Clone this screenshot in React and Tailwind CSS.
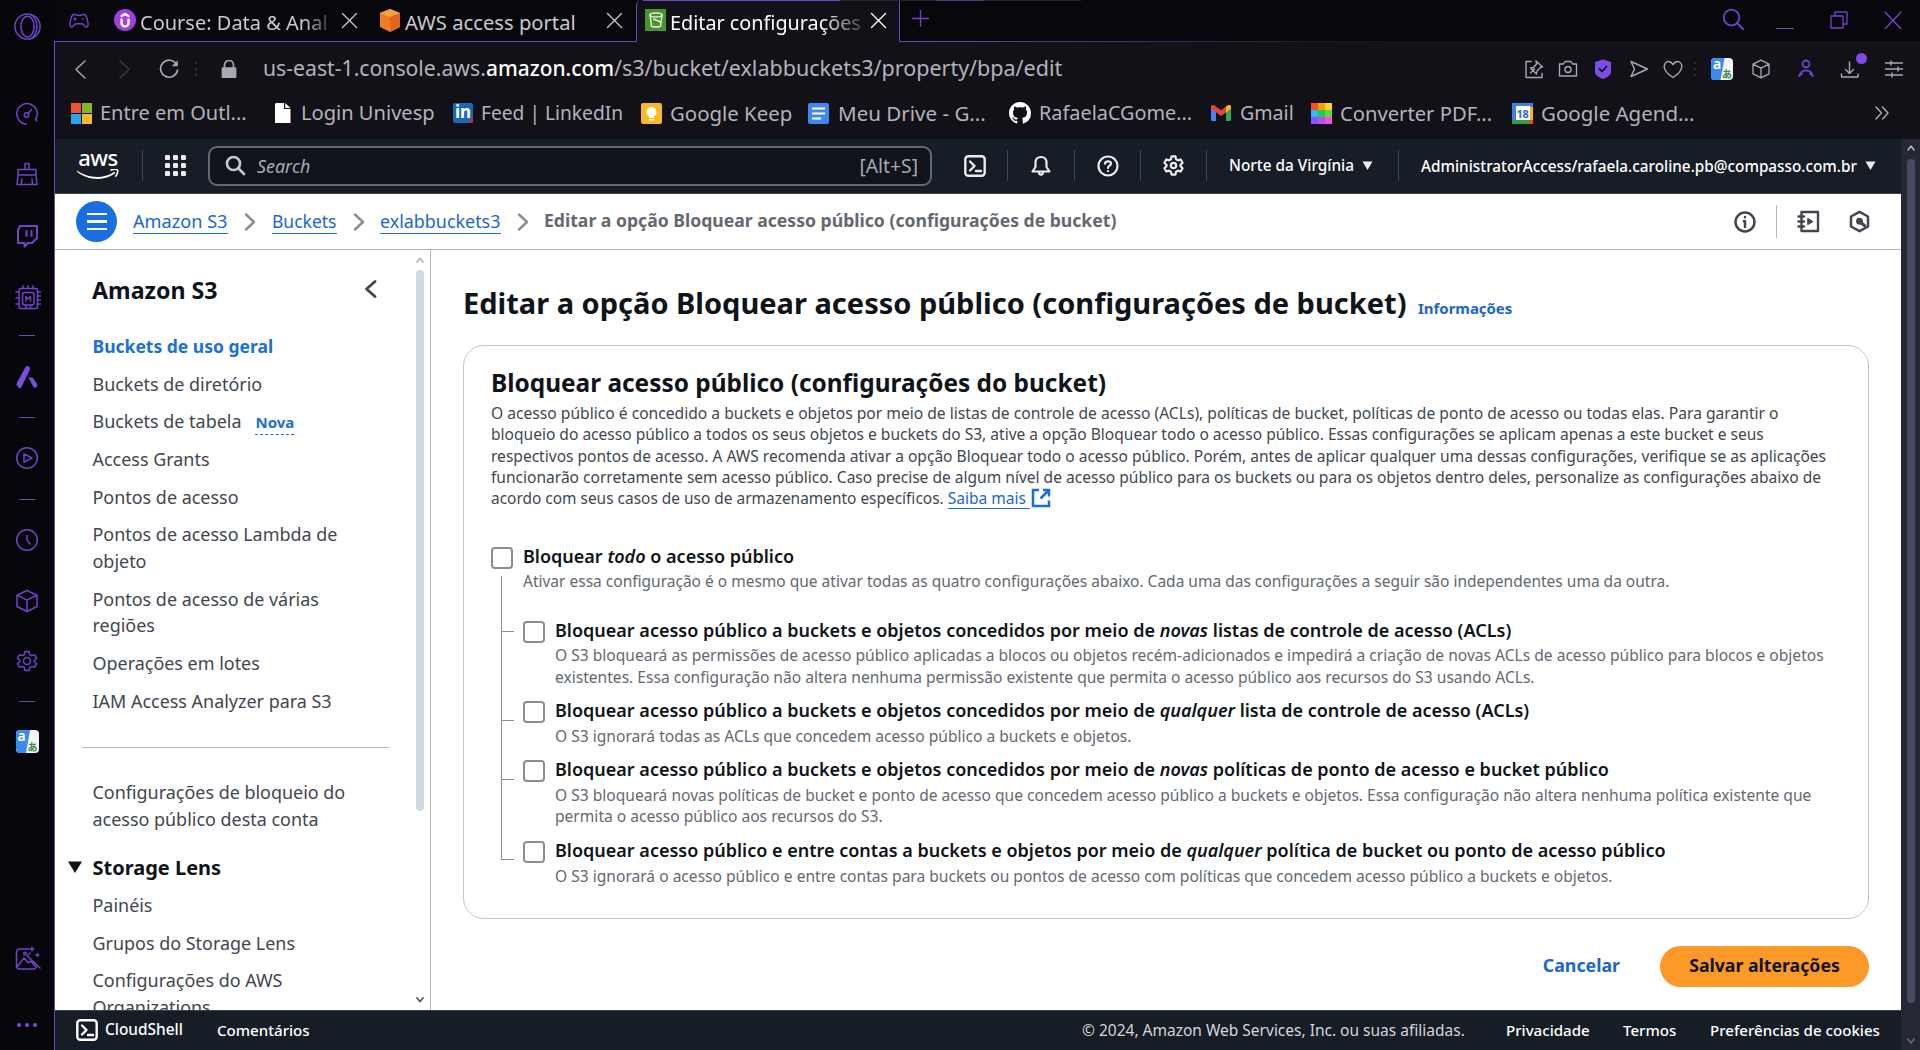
import React from "react";

/* ---------- shared drawing helpers ---------- */

function Ico({ className = "", box = 24, sw = 1.5, fill = "none", children }) {
  return (
    <svg
      viewBox={`0 0 ${box} ${box}`}
      className={`shrink-0 ${className}`}
      fill={fill}
      stroke={fill === "none" ? "currentColor" : "none"}
      strokeWidth={sw}
      strokeLinecap="round"
      strokeLinejoin="round"
    >
      {children}
    </svg>
  );
}

function Translate({ className }) {
  return (
    <span className={`relative block shrink-0 rounded-[4px] bg-[#f2f4f5] ${className}`}>
      <svg viewBox="0 0 22 22" className="absolute inset-0 size-full">
        <path d="M4 0h9.500L9.500 22H4a4 4 0 0 1-4-4V4a4 4 0 0 1 4-4z" fill="#3a8bea" />
      </svg>
      <span className="absolute left-[2px] top-0 font-['Noto_Sans'] text-[14px] font-semibold leading-[11px] text-white">a</span>
      <span className="absolute bottom-[1px] right-[1px] font-['Noto_Sans_CJK_JP'] text-[10px] font-bold leading-[11px] text-[#3c8b3f]">あ</span>
    </span>
  );
}

const gearPath =
  "M10 2.5h4l.7 3 1.9 1.1 2.9-.9 2 3.5-2.2 2.1v1.4l2.2 2.1-2 3.5-2.9-.9-1.9 1.1-.7 3h-4l-.7-3-1.9-1.1-2.9.9-2-3.5 2.2-2.1v-1.4L2.5 9.2l2-3.5 2.9.9 1.9-1.1z";

/* ---------- left browser rail ---------- */

function Dash({ className }) {
  return <span className={`block h-px w-4 self-center bg-[#6c46c4] ${className}`} />;
}

function Rail() {
  return (
    <aside className="flex h-[1050px] w-[54px] shrink-0 flex-col items-center bg-[#07060b] text-[#6d45c6]">
      <Ico className="mt-[13px] size-[27px]" box={27}>
        <circle cx="13.5" cy="13.5" r="12.6" />
        <ellipse cx="13.5" cy="13.5" rx="6.6" ry="10.3" />
        <path d="M16 1.4c4 1.2 7 6.300 7 12.100s-3 10.900-7 12.100" />
      </Ico>
      <Ico className="mt-[62px] size-6">
        <path d="M11.500 22A10.200 10.200 0 1 1 20.500 17.500" />
        <circle cx="11.500" cy="13" r="2.200" />
        <path d="m13 11.500 3.500-4" />
        <path d="M21.500 15v4" strokeDasharray="1 2" />
      </Ico>
      <Ico className="mt-9 size-6">
        <path d="M10 7.500V1.500h4v6M3 13V7.500h18V13M3 13 2 22.500h20L21 13zM7 17l-.7 5M17 17l.5 5" />
      </Ico>
      <Ico className="mt-[38px] size-6" sw={2}>
        <path d="M5 2h17v12l-5 5h-4l-3.500 3.500V19H3V6z" />
        <path d="M11.500 7v5M16.500 7v5" />
      </Ico>
      <Ico className="mt-[37px] ml-[2px] size-[26px]" box={26}>
        <rect x="4" y="3.500" width="18.500" height="20" rx="1.500" />
        <rect x="7.500" y="7.500" width="11.500" height="12.500" rx="2.500" />
        <path d="M11 16v-4.500l2.200 2.500 2.300-2.500V16M8 3V.800M13 3V.800M18 3V.800M4 7H1M4 13H1M4 19H1M22.500 7H25.500M22.500 11h3M22.500 15h3M22.500 19h3M11 20v3.500M15.500 20v3.500" />
      </Ico>
      <Dash className="mt-6" />
      <Ico className="mt-[29px] size-6" fill="#7c4be0">
        <path d="M12.500 1c1.500 0 2.500 1.500 2.500 3.500L6.500 22c-.8 1.600-2 1.500-3 .5L2 20.500c-.7-1-.5-2 0-3L10 3c.6-1.200 1.500-2 2.500-2z" />
        <path d="M13.500 12.500c2.500-.8 4.500 0 5.500 2l3 4.500c.6.800.5 1.800 0 2.500l-1.200 1c-1 .7-2 .3-2.600-.700z" />
      </Ico>
      <Dash className="mt-7" />
      <Ico className="mt-7 size-6">
        <circle cx="12" cy="12" r="10.300" />
        <path d="M9 7.800v8.400l8-4.200z" />
      </Ico>
      <Dash className="mt-[29px]" />
      <Ico className="mt-7 size-6">
        <circle cx="12" cy="12" r="10.300" />
        <path d="M12 7.500V12l3.200 4" />
      </Ico>
      <Ico className="mt-[37px] size-6">
        <path d="m12 1.500 10 4.700v11.300l-10 5-10-5V6.200zM2 6.200l10 5 10-5M12 11.200v11.300" />
      </Ico>
      <Ico className="mt-9 size-6">
        <path d={gearPath} />
        <circle cx="12" cy="12" r="3.500" />
      </Ico>
      <Dash className="mt-7" />
      <Translate className="mt-7 size-[23px]" />
      <Ico className="mt-[193px] ml-[2px] size-[26px]" box={26}>
        <path d="M14 3H4.500A3 3 0 0 0 1.500 6v14a3 3 0 0 0 3 3H19a3 3 0 0 0 2.500-1.500M2 21l7-9 4.500 5 2.500-2 5 6M12 9.500 25 22M15 7l-1.500 1.500" />
        <circle cx="10" cy="7.500" r="1.300" />
        <path d="M17 1v4M15 3h4M22.500 7.500v3M21 9h3" />
      </Ico>
      <div className="mt-[51px] flex gap-1">
        <span className="size-1 rounded-full bg-[#7c4be0]" />
        <span className="size-1 rounded-full bg-[#7c4be0]" />
        <span className="size-1 rounded-full bg-[#7c4be0]" />
      </div>
    </aside>
  );
}

/* ---------- tab strip ---------- */

function Cross({ className }) {
  return (
    <Ico className={`h-[17px] w-[17px] ${className}`} box={17} sw={1.3}>
      <path d="m1.500 1.500 14 14M15.500 1.500l-14 14" />
    </Ico>
  );
}

function TabStrip() {
  return (
    <div className="relative flex h-[42px] bg-[#08070c] text-[20px] leading-[27px] text-[#c9c9cf]">
      <div className="flex h-[42px] w-[582px] shrink-0 border-b border-[#6c46c4] pl-[15px]">
        <Ico className="mt-[11px] h-[20px] w-[20px] text-[#6d45c6]" box={20} sw={1.4}>
          <path d="M4.500 3.500C6 2.800 7 4.500 10 4.500s4-1.700 5.500-1c2.500 1.200 3.800 8 3.500 11-.1 1.700-2 2-3 .8-1.300-1.600-1.800-2.600-3.500-2.600h-5c-1.700 0-2.200 1-3.500 2.600-1 1.200-2.900.9-3-.8-.3-3 1-9.800 3.500-11z" />
          <path d="M6 7v2M5 8h2M13.500 8h.5" />
        </Ico>
        <div className="ml-[25px] mt-[9px] flex size-[22px] shrink-0 items-center justify-center rounded-full bg-[#a03ee6] text-white">
          <Ico className="size-[18px]" box={18} sw={2.400}>
            <path d="M5.500 8.500v3.500a3.500 3.500 0 0 0 7 0V8.500M5.500 5 9 3l3.500 2" />
          </Ico>
        </div>
        <div className="ml-[4px] mt-[9px] w-[194px] shrink-0 whitespace-nowrap [mask-image:linear-gradient(to_right,#000_165px,transparent_196px)]">
          Course: Data &amp; Anal
        </div>
        <Cross className="ml-[7px] mt-[12px]" />
        <svg viewBox="0 0 22 24" className="ml-[21px] mt-[8px] h-[24px] w-[22px] shrink-0">
          <path d="M11 1 21 5v14l-10 5L1 19V5z" fill="#ef7d23" />
          <path d="M11 1 21 5l-10 4L1 5z" fill="#f9a13a" />
          <path d="M11 9 21 5v14l-10 5z" fill="#e4661c" />
        </svg>
        <span className="ml-[4px] mt-[9px] w-[173px] shrink-0 whitespace-nowrap text-[20.200px]">AWS access portal</span>
        <Cross className="ml-[28px] mt-[12px]" />
      </div>
      <div className="flex h-[42px] w-[264px] shrink-0 rounded-tl-[5px] border-l border-r border-[#6c46c4] bg-[#121117] pl-[8px] text-white">
        <div className="mt-[9px] flex h-[22px] w-[21px] shrink-0 items-center justify-center bg-[#4a942f]">
          <Ico className="size-[18px] text-[#dff0d5]" box={18}>
            <ellipse cx="9" cy="4" rx="6" ry="2" />
            <path d="m3 4 1.500 11c1 1.300 8 1.300 9 0L15 4M6.500 8l7 3" />
          </Ico>
        </div>
        <div className="ml-[4px] mt-[9px] w-[192px] shrink-0 whitespace-nowrap text-[19.800px] [mask-image:linear-gradient(to_right,#000_150px,transparent_202px)]">
          Editar configurações
        </div>
        <Cross className="ml-[8px] mt-[12px]" />
      </div>
      <div className="flex flex-1 flex-col">
        <div className="flex h-[41px] pl-[12px] text-[#6d45c6]">
          <Ico className="mt-[10px] size-[17px]" box={17} sw={1.300}>
            <path d="M8.500.500v16M.500 8.500h16" />
          </Ico>
          <Ico className="ml-[793px] mt-[8px] size-[22px]" box={22} sw={1.800}>
            <circle cx="9.500" cy="9.500" r="7.800" />
            <path d="m15 15 6 6" />
          </Ico>
          <span className="ml-[32px] mt-[28px] h-px w-[18px] shrink-0 bg-[#6d45c6]" />
          <Ico className="ml-[36px] mt-[11px] size-[18px]" box={18} sw={1.300}>
            <path d="M1 5h12v12H1zM5 5V1h12v12h-4" />
          </Ico>
          <Ico className="ml-[36px] mt-[11px] size-[18px]" box={18} sw={1.400}>
            <path d="m1 1 16 17M17 1 1 18" />
          </Ico>
        </div>
        <div className="h-px bg-gradient-to-r from-[#6c46c4] from-0% to-[#121117] to-50%" />
      </div>
      <div className="absolute left-[589px] top-0 flex h-px">
        <span className="w-[197px] bg-[#6c46c4]" />
        <span className="w-[96px] bg-[#26252c]" />
        <span className="w-[48px] bg-[#4b3a7c]" />
        <span className="w-[97px] bg-[#26252c]" />
      </div>
    </div>
  );
}

/* ---------- address bar ---------- */

function AddressBar() {
  return (
    <div className="flex h-[54px] items-center bg-[#121117] text-[#a9a8b4]">
      <Ico className="ml-[16px] size-[19px]" box={19} sw={1.500}>
        <path d="M14 1 5 9.500l9 8.500" />
      </Ico>
      <Ico className="ml-[25px] size-[19px] text-[#3b3a42]" box={19} sw={1.500}>
        <path d="m5 1 9 8.500L5 18" />
      </Ico>
      <Ico className="ml-[25px] size-[20px]" box={20} sw={1.700}>
        <path d="M17.500 5.500A8.500 8.500 0 1 0 18.500 11" />
        <path d="M18.500 2v5h-5z" fill="currentColor" strokeWidth="0.500" />
      </Ico>
      <div className="ml-[16px] flex flex-col gap-[4px]">
        <span className="size-[2px] bg-[#2e2d35]" />
        <span className="size-[2px] bg-[#2e2d35]" />
        <span className="size-[2px] bg-[#2e2d35]" />
      </div>
      <Ico className="ml-[23px] size-[18px]" box={18} sw={1.700}>
        <path d="M4.500 8V5a4.500 4.500 0 0 1 9 0v3" />
        <path d="M2.500 8h13v9.300h-13z" fill="currentColor" />
      </Ico>
      <div className="-mt-[3px] ml-[25px] flex whitespace-nowrap text-[21.200px] leading-[30px] text-[#b3b3bd]">
        <span className="w-[223px]">us-east-1.console.aws.</span>
        <span className="w-[128px] text-[20.900px] font-medium text-white">amazon.com</span>
        <span className="w-[449px] text-[21.500px]">/s3/bucket/exlabbuckets3/property/bpa/edit</span>
      </div>
      <Ico className="ml-[461px] size-[20px]" box={20} sw={1.400}>
        <path d="M7 2.500H2v16h16v-4M6.500 14l4-4M12 2l6.500 6-2 .5-3.500 3.500-.5 3L6.500 9l3-.5L12.500 5z" />
      </Ico>
      <Ico className="ml-[14px] size-[20px]" box={20} sw={1.400}>
        <path d="M1.500 5h4l1.500-2.500h6L14.500 5h4v12h-17z" />
        <circle cx="10" cy="10.500" r="3" />
      </Ico>
      <svg viewBox="0 0 18 20" className="ml-[16px] h-[20px] w-[18px] shrink-0">
        <path d="M9 .500 17 3v10c0 3.500-4 5.500-8 7-4-1.500-8-3.500-8-7V3z" fill="#7c4be8" />
        <path d="m5 9.500 3 3 5-5.500" fill="none" stroke="#121117" strokeWidth="1.800" />
      </svg>
      <Ico className="ml-[17px] size-[20px]" box={20} sw={1.400}>
        <path d="m2 2.500 16.500 7.500L2 17.500 5.500 10z" />
      </Ico>
      <Ico className="ml-[14px] size-[20px]" box={20} sw={1.400}>
        <path d="M10 18.500C4.500 15 1.200 11.500 1.200 7.500c0-3 2-5 4.300-5S9 4 10 5.500c1-1.500 2.200-3 4.500-3s4.300 2 4.300 5c0 4-3.300 7.500-8.800 11z" />
      </Ico>
      <div className="ml-[11px] flex flex-col gap-[4px]">
        <span className="size-[2px] bg-[#2e2d35]" />
        <span className="size-[2px] bg-[#2e2d35]" />
        <span className="size-[2px] bg-[#2e2d35]" />
      </div>
      <Translate className="ml-[15px] size-[22px]" />
      <Ico className="ml-[18px] size-[20px]" box={20} sw={1.300}>
        <path d="m10 1.200 8 4v9.600l-8 4-8-4V5.200zM2 5.200l8 4 8-4M10 9.200v9.600" />
      </Ico>
      <Ico className="ml-[25px] size-[20px] text-[#6d45c6]" box={20} sw={1.800}>
        <circle cx="10" cy="5" r="3.500" />
        <path d="M3.500 17c0-3.500 3-5.500 6.500-5.500s6.500 2 6.500 5.500M6 14.500 3 17M14 14.500l3 2.500" />
      </Ico>
      <div className="relative ml-[24px] size-[20px] shrink-0">
        <Ico className="size-[20px]" box={20} sw={1.400}>
          <path d="M9.500 3v11M5.500 10.500l4 4 4-4M1.500 15v3h16.500v-3" />
        </Ico>
        <span className="absolute -top-[6px] left-[16px] size-[11px] rounded-full bg-[#7c4be8]" />
      </div>
      <Ico className="ml-[24px] size-[20px]" box={20} sw={1.400}>
        <path d="M1.500 4h17M1.500 10h17M1.500 16h17M7 2v4M14 8v4M8 14v4" />
      </Ico>
    </div>
  );
}

/* ---------- bookmarks ---------- */

function Bookmarks() {
  return (
    <div className="flex h-[43px] bg-[#121117] pb-[9px] text-[#b3b3bd]">
      <div className="flex flex-1 items-center whitespace-nowrap text-[20px] leading-[30px]">
        <div className="ml-[16px] grid size-[21px] shrink-0 grid-cols-2 gap-px">
          <span className="bg-[#f0532a]" />
          <span className="bg-[#80b82c]" />
          <span className="bg-[#2ba3ee]" />
          <span className="bg-[#fbb72d]" />
        </div>
        <span className="ml-[8px] w-[148px] shrink-0">Entre em Outl...</span>
        <svg viewBox="0 0 16 20" className="ml-[27px] h-[20px] w-[16px] shrink-0">
          <path d="M1 0h8v6h6.500v14H0V1z" fill="#fff" />
          <path d="m10.200 0 5.300 5h-5.300z" fill="#fff" />
        </svg>
        <span className="ml-[10px] w-[134px] shrink-0 text-[20.100px]">Login Univesp</span>
        <div className="relative ml-[18px] flex h-[20px] w-[20px] shrink-0 items-center justify-center rounded-[2px] bg-[#1d67b8] text-[17px] font-bold leading-none text-white">
          <span className="-mt-[3px]">in</span>
          <span className="absolute bottom-0 right-0 size-[4px] rounded-full bg-[#d22c35]" />
        </div>
        <span className="ml-[8px] w-[142px] shrink-0 text-[19.200px]">Feed | LinkedIn</span>
        <svg viewBox="0 0 21 21" className="ml-[18px] size-[21px] shrink-0">
          <rect width="21" height="21" rx="2" fill="#fbb827" />
          <circle cx="10.500" cy="9" r="5" fill="#fff" />
          <path d="M8 12h5v3H8zM8 16h5v1.500H8z" fill="#fff" />
        </svg>
        <span className="ml-[8px] w-[123px] shrink-0 text-[20.400px]">Google Keep</span>
        <svg viewBox="0 0 21 21" className="ml-[15px] size-[21px] shrink-0">
          <rect width="21" height="21" rx="2" fill="#4285f4" />
          <path d="M4 4.500h13v2H4zM4 9.500h13v2H4zM4 14.500h9v2H4z" fill="#fff" />
        </svg>
        <span className="ml-[9px] w-[149px] shrink-0 text-[20.550px]">Meu Drive - G...</span>
        <svg viewBox="0 0 16 16" className="ml-[22px] size-[22px] shrink-0">
          <path
            fill="#fff"
            d="M8 0C3.580 0 0 3.580 0 8c0 3.540 2.290 6.530 5.470 7.590.4.070.55-.17.55-.38 0-.19-.01-.82-.01-1.490-2.010.37-2.530-.49-2.690-.94-.09-.23-.48-.94-.82-1.130-.28-.15-.68-.52-.01-.53.63-.01 1.080.58 1.230.82.720 1.210 1.870.87 2.330.66.070-.52.280-.87.510-1.070-1.780-.2-3.640-.89-3.640-3.950 0-.87.310-1.590.820-2.150-.08-.2-.36-1.020.080-2.120 0 0 .67-.21 2.200.82.640-.18 1.320-.27 2-.27s1.360.090 2 .27c1.530-1.040 2.200-.82 2.200-.82.440 1.100.160 1.920.080 2.120.51.560.82 1.270.82 2.150 0 3.070-1.870 3.750-3.650 3.950.29.250.54.730.54 1.480 0 1.070-.01 1.930-.01 2.200 0 .21.150.46.550.38A8.010 8.010 0 0 0 16 8c0-4.420-3.580-8-8-8z"
          />
        </svg>
        <span className="ml-[8px] w-[153px] shrink-0 text-[19.850px]">RafaelaCGome...</span>
        <svg viewBox="0 0 20 16" className="ml-[19px] h-[16px] w-[20px] shrink-0">
          <path d="M0 2v12.500A1.500 1.500 0 0 0 1.500 16H5V7z" fill="#4285f4" />
          <path d="M20 2v12.500a1.500 1.500 0 0 1-1.500 1.500H15V7z" fill="#34a853" />
          <path d="M15 1.500V7.500l5-4V2c0-2-2-2.500-3.500-1.500z" fill="#fbbc04" />
          <path d="M0 2v1.500l10 7.500 5-3.500V1.500L10 5.200 3.500.500C2-.5 0 0 0 2z" fill="#ea4335" />
        </svg>
        <span className="ml-[9px] w-[54px] shrink-0 text-[19.600px]">Gmail</span>
        <svg viewBox="0 0 21 21" className="ml-[17px] size-[21px] shrink-0">
          <path d="M0 0h7v7H0z" fill="#f5501e" />
          <path d="M7 0h7v7H7z" fill="#fb9a1c" />
          <path d="M14 0h7v7h-7z" fill="#fbd32c" />
          <path d="M0 7h7v7H0z" fill="#35b6f7" />
          <path d="M7 7h7v7H7z" fill="#1ecb52" />
          <path d="M14 7h7v7h-7z" fill="#67d63c" />
          <path d="M0 14h7v7H0z" fill="#8456f5" />
          <path d="M7 14h7v7H7z" fill="#b455f0" />
          <path d="M14 14h7v7h-7z" fill="#f152e0" />
        </svg>
        <span className="ml-[8px] w-[152px] shrink-0 text-[20.200px]">Converter PDF...</span>
        <div className="relative ml-[20px] flex size-[21px] shrink-0 items-center justify-center bg-[#3f7fe8]">
          <span className="absolute right-0 top-[4px] h-[13px] w-[4px] bg-[#fbbc04]" />
          <span className="absolute bottom-0 left-0 h-[4px] w-[17px] bg-[#2f9e50]" />
          <span className="absolute bottom-0 right-0 size-[4px] bg-[#ea4335]" />
          <span className="relative flex size-[14px] items-center justify-center bg-white text-[11px] font-bold leading-none tracking-tight text-[#2d6bd6]">18</span>
        </div>
        <span className="ml-[8px] w-[153px] shrink-0 text-[20.500px]">Google Agend...</span>
        <Ico className="ml-[181px] h-[14px] w-[14px]" box={14} sw={1.300}>
          <path d="m1 1 5.500 6L1 13M7.500 1 13 7l-5.500 6" />
        </Ico>
      </div>
    </div>
  );
}

/* ---------- AWS navigation ---------- */

function Sep({ className }) {
  return <span className={`h-[31px] w-px shrink-0 bg-[#424650] ${className}`} />;
}

function Terminal({ className }) {
  return (
    <Ico className={className} box={22} sw={2.400}>
      <rect x="1.300" y="1.300" width="19.400" height="19.400" rx="3" />
      <path d="m6 6.500 4.500 4.500L6 15.500M12 16h5" />
    </Ico>
  );
}

function Caret({ className }) {
  return (
    <svg viewBox="0 0 11 9" className={`h-[9px] w-[11px] shrink-0 ${className}`}>
      <path d="M.500.500h10L5.500 9z" fill="currentColor" />
    </svg>
  );
}

function AwsNav() {
  return (
    <nav className="flex h-[55px] items-center border-b border-[#3b424d] bg-[#161d26] pb-px text-[#ebebf0]">
      <div className="ml-[22px] flex h-[28px] w-[42px] shrink-0 flex-col items-center text-white">
        <span className="h-[17px] text-[22px] font-medium leading-[17px] tracking-[-0.500px]">
          <span className="relative -top-[3px]">aws</span>
        </span>
        <svg viewBox="0 0 42 11" className="h-[11px] w-[42px]">
          <path d="M0 1.500c10 7.500 26 9 37 1.500 1 0 1.500.800.800 1.600C28 12.500 10 11.500 0 2.800z" fill="#fff" />
          <path d="M33.500 1.200c3-1.200 6-1 7-.2.700 1-.2 4.500-2.200 6.800" fill="none" stroke="#fff" strokeWidth="1.600" />
        </svg>
      </div>
      <Sep className="ml-[23px]" />
      <div className="ml-[22px] grid size-[21px] shrink-0 grid-cols-3 gap-[3px]">
        {Array.from({ length: 9 }, (_, i) => (
          <span key={i} className="rounded-[1px] bg-[#ebebf0]" />
        ))}
      </div>
      <div className="ml-[22px] flex h-[40px] w-[724px] shrink-0 items-center rounded-[9px] border-2 border-[#656871] bg-[#0f141a] text-[#a9a9b3]">
        <Ico className="ml-[15px] size-[21px] text-[#c6c6cd]" box={21} sw={2.700}>
          <circle cx="8.500" cy="8.500" r="6.500" />
          <path d="m13.500 13.500 5.500 5.500" />
        </Ico>
        <span className="ml-[11px] flex-1 text-[17.900px] italic leading-[24px]">Search</span>
        <span className="mr-[12px] text-[19.300px] leading-[24px]">[Alt+S]</span>
      </div>
      <Terminal className="ml-[32px] size-[22px]" />
      <Sep className="ml-[21px]" />
      <Ico className="ml-[22px] size-[22px]" box={22} sw={2.200}>
        <path d="M11 2c-3.500 0-5.500 2.500-5.500 5.500V12L2.500 16.500h17L16.500 12V7.500C16.500 4.500 14.500 2 11 2z" />
        <path d="M9 17c0 3.500 4 3.500 4 0" />
      </Ico>
      <Sep className="ml-[22px]" />
      <Ico className="ml-[22px] size-[22px]" box={22} sw={2.200}>
        <circle cx="11" cy="11" r="9.500" />
        <path d="M8 8.700C8 5.500 14 5.500 14 8.700c0 2-3 2-3 4.300M11 16v.200" />
      </Ico>
      <Sep className="ml-[21px]" />
      <Ico className="ml-[21px] size-[23px]" sw={2.300}>
        <path d={gearPath} />
        <circle cx="12" cy="12" r="2.800" />
      </Ico>
      <Sep className="ml-[21px]" />
      <span className="ml-[22px] w-[125px] shrink-0 whitespace-nowrap text-[15.360px] font-medium leading-[22px] text-white">Norte da Virgínia</span>
      <Caret className="ml-[8px]" />
      <Sep className="ml-[25px]" />
      <span className="ml-[22px] w-[437px] shrink-0 whitespace-nowrap text-[15.300px] font-medium leading-[22px] text-white">
        AdministratorAccess/rafaela.caroline.pb@compasso.com.br
      </span>
      <Caret className="ml-[7px]" />
    </nav>
  );
}

/* ---------- breadcrumb ---------- */

function Crumb({ className, children }) {
  return <span className={`-mt-px shrink-0 border-b-[1.500px] border-[#1a6fe0] leading-[24px] text-[#1a66d6] ${className}`}>{children}</span>;
}

function Chev({ className }) {
  return (
    <Ico className={`size-[18px] text-[#8c8c94] ${className}`} box={18} sw={2.400}>
      <path d="m5 1.500 8 7.500-8 7.500" />
    </Ico>
  );
}

function Breadcrumb() {
  return (
    <div className="flex h-[56px] items-center border-b border-[#b6b6bd] bg-white text-[#424650]">
      <div className="ml-[21px] flex size-[41px] shrink-0 flex-col items-center justify-center gap-[5px] rounded-full bg-[#1a6fe0]">
        <span className="h-[2.500px] w-[20px] bg-white" />
        <span className="h-[2.500px] w-[20px] bg-white" />
        <span className="h-[2.500px] w-[20px] bg-white" />
      </div>
      <Crumb className="ml-[16px] w-[95px] text-[18.150px]">Amazon S3</Crumb>
      <Chev className="ml-[13px]" />
      <Crumb className="ml-[13px] w-[65px] text-[17.500px]">Buckets</Crumb>
      <Chev className="ml-[13px]" />
      <Crumb className="ml-[12px] w-[121px] text-[17.900px]">exlabbuckets3</Crumb>
      <Chev className="ml-[13px]" />
      <span className="-mt-[3px] ml-[12px] w-[575px] shrink-0 whitespace-nowrap text-[17.600px] font-bold leading-[24px] text-[#656871]">
        Editar a opção Bloquear acesso público (configurações de bucket)
      </span>
      <Ico className="ml-[615px] size-[22px]" box={22} sw={2.500}>
        <circle cx="11" cy="11" r="9.500" />
        <path d="M11 10v6M11 6v.200M9.800 10.200H11" />
      </Ico>
      <span className="ml-[20px] h-[33px] w-px bg-[#b6b6bd]" />
      <Ico className="ml-[20px] size-[23px]" box={23} sw={2.400}>
        <path d="M4.500 2h16.500v19H4.500zM1.500 6.500H7M1.500 11.500H7M1.500 16.500H7" />
        <path d="m11 8.500 5 3-5 3z" fill="currentColor" strokeWidth="1" />
      </Ico>
      <Ico className="ml-[28px] size-[23px]" box={23} sw={2.500}>
        <path d="m11.500 1.800 8.500 4.700v10l-8.500 4.700L3 16.500v-10z" />
        <path d="m12 12 4.500 3.500" strokeWidth="3" />
        <circle cx="11.500" cy="11.300" r="2.200" fill="currentColor" />
      </Ico>
    </div>
  );
}

/* ---------- side navigation ---------- */

function NavItem({ children, className = "" }) {
  return <li className={`mb-[10.800px] leading-[26.800px] ${className}`}>{children}</li>;
}

function SideNav() {
  return (
    <aside className="flex h-[760px] w-[376px] shrink-0 overflow-hidden border-r border-[#b6b6bd] bg-white text-[17.950px] text-[#424650]">
      <div className="w-[361px] shrink-0 whitespace-nowrap">
        <div className="mt-[26px] flex h-[28px] items-center pl-[37px]">
          <h2 className="w-[270px] text-[23.200px] font-bold leading-[28px] text-[#0f141a]">Amazon S3</h2>
          <Ico className="-mt-[2px] size-[18px]" box={18} sw={2.800}>
            <path d="M13 1.500 4.500 9l8.500 7.500" />
          </Ico>
        </div>
        <ul className="mt-[29px] pl-[37.500px]">
          <NavItem className="text-[17.500px] font-bold text-[#1a6fe0]">Buckets de uso geral</NavItem>
          <NavItem>Buckets de diretório</NavItem>
          <NavItem>
            Buckets de tabela
            <span className="ml-[14px] inline-block border-b border-dashed border-[#1a6fe0] text-[15px] font-bold leading-[23px] text-[#1a6fe0]">Nova</span>
          </NavItem>
          <NavItem>Access Grants</NavItem>
          <NavItem>Pontos de acesso</NavItem>
          <NavItem>
            Pontos de acesso Lambda de
            <br />
            objeto
          </NavItem>
          <NavItem>
            Pontos de acesso de várias
            <br />
            regiões
          </NavItem>
          <NavItem>Operações em lotes</NavItem>
          <NavItem>IAM Access Analyzer para S3</NavItem>
        </ul>
        <div className="ml-[27px] mt-[33px] h-px w-[307px] bg-[#b6b6bd]" />
        <ul className="mt-[31px] pl-[37.500px]">
          <NavItem>
            Configurações de bloqueio do
            <br />
            acesso público desta conta
          </NavItem>
        </ul>
        <div className="mt-[21px] flex h-[27px] items-center pl-[13px] text-[#0f141a]">
          <svg viewBox="0 0 14 12" className="h-[12px] w-[14px]">
            <path d="M0 .500h14L7 12z" fill="currentColor" />
          </svg>
          <h3 className="ml-[10.500px] text-[20px] font-bold leading-[27px]">Storage Lens</h3>
        </div>
        <ul className="mt-[11px] pl-[37.500px]">
          <NavItem>Painéis</NavItem>
          <NavItem>Grupos do Storage Lens</NavItem>
          <NavItem>
            Configurações do AWS
            <br />
            Organizations
          </NavItem>
        </ul>
      </div>
      <div className="flex w-[8px] flex-col items-center">
        <Ico className="mt-[6px] h-[8px] w-[8px] text-[#b6b6bd]" box={8} sw={1.800}>
          <path d="M1 6 4 2.500 7 6" />
        </Ico>
        <span className="mt-[6px] h-[541px] w-[8px] rounded-full bg-[#cfdae3]" />
        <Ico className="mt-[185px] h-[8px] w-[8px] text-[#55585f]" box={8} sw={1.800}>
          <path d="m1 2 3 3.500L7 2" />
        </Ico>
      </div>
    </aside>
  );
}

/* ---------- settings card ---------- */

function Check() {
  return <span className="block size-[22px] shrink-0 rounded-[4px] border-[2.500px] border-[#8c8c94] bg-white" />;
}

function Setting({ label, tick, children, className = "" }) {
  return (
    <div className={`relative flex pl-[32px] ${className}`}>
      <span className={`absolute left-[11px] h-px w-[12px] bg-[#8c8c94] ${tick}`} />
      <div className="pt-[4px]">
        <Check />
      </div>
      <div className="ml-[10px] whitespace-nowrap">
        <div className="text-[18px] font-semibold leading-[26.700px] text-[#0f141a]">{label}</div>
        <div className="mt-[2px] text-[15.580px] leading-[21.330px] text-[#656871]">{children}</div>
      </div>
    </div>
  );
}

function Main() {
  return (
    <main className="h-[760px] flex-1 overflow-hidden bg-white pl-[32px] pr-[32px] font-['Noto_Sans'] text-[#424650]">
      <div className="mt-[32px] flex h-[41px] items-baseline whitespace-nowrap">
        <h1 className="w-[943px] text-[29px] font-bold leading-[41px] text-[#0f141a]">
          Editar a opção Bloquear acesso público (configurações de bucket)
        </h1>
        <span className="ml-[12px] text-[14.950px] font-bold leading-[22px] text-[#1a66d6]">Informações</span>
      </div>
      <section className="mt-[22px] h-[574px] w-[1406px] rounded-[21px] border border-[#c6c6cd] pl-[27px]">
        <h2 className="mt-[21px] text-[24.400px] font-bold leading-[32px] text-[#0f141a]">
          Bloquear acesso público (configurações do bucket)
        </h2>
        <p className="mt-[4px] whitespace-nowrap text-[15.560px] leading-[21.330px]">
          <span className="text-[15.630px]">
            O acesso público é concedido a buckets e objetos por meio de listas de controle de acesso (ACLs), políticas de bucket, políticas de ponto de acesso ou todas elas. Para garantir o
          </span>
          <br />
          bloqueio do acesso público a todos os seus objetos e buckets do S3, ative a opção Bloquear todo o acesso público. Essas configurações se aplicam apenas a este bucket e seus
          <br />
          respectivos pontos de acesso. A AWS recomenda ativar a opção Bloquear todo o acesso público. Porém, antes de aplicar qualquer uma dessas configurações, verifique se as aplicações
          <br />
          funcionarão corretamente sem acesso público. Caso precise de algum nível de acesso público para os buckets ou para os objetos dentro deles, personalize as configurações abaixo de
          <br />
          <span className="text-[15.440px]">acordo com seus casos de uso de armazenamento específicos. </span>
          <a className="inline-flex border-b border-[#1a6fe0] pr-[4px] leading-[19px] text-[#1a66d6]">Saiba mais</a>
          <Ico className="ml-[1px] inline-block size-[20px] align-[-4px] text-[#1a6fe0]" box={20} sw={2.500}>
            <path d="M8 2H2v16h16v-5.500M12 2h6v6.500M17.500 2.500l-8 8" strokeLinecap="butt" strokeLinejoin="miter" />
          </Ico>
        </p>
        <div className="relative mt-[33px]">
          <div className="flex">
            <div className="pt-[4px]">
              <Check />
            </div>
            <div className="ml-[10px] whitespace-nowrap">
              <div className="text-[18px] font-semibold leading-[26.700px] text-[#0f141a]">
                Bloquear <i>todo</i> o acesso público
              </div>
              <div className="mt-[2px] text-[15.510px] leading-[21.330px] text-[#656871]">
                Ativar essa configuração é o mesmo que ativar todas as quatro configurações abaixo. Cada uma das configurações a seguir são independentes uma da outra.
              </div>
            </div>
          </div>
          <span className="absolute left-[10px] top-[33px] h-[284px] w-px bg-[#8c8c94]" />
          <Setting
            className="mt-[24px]"
            tick="top-[14px]"
            label={<>Bloquear acesso público a buckets e objetos concedidos por meio de <i>novas</i> listas de controle de acesso (ACLs)</>}
          >
            O S3 bloqueará as permissões de acesso público aplicadas a blocos ou objetos recém-adicionados e impedirá a criação de novas ACLs de acesso público para blocos e objetos
            <br />
            existentes. Essa configuração não altera nenhuma permissão existente que permita o acesso público aos recursos do S3 usando ACLs.
          </Setting>
          <Setting
            className="mt-[9px]"
            tick="top-[23px]"
            label={<>Bloquear acesso público a buckets e objetos concedidos por meio de <i>qualquer</i> lista de controle de acesso (ACLs)</>}
          >
            O S3 ignorará todas as ACLs que concedem acesso público a buckets e objetos.
          </Setting>
          <Setting
            className="mt-[9px]"
            tick="top-[23px]"
            label={<>Bloquear acesso público a buckets e objetos concedidos por meio de <i>novas</i> políticas de ponto de acesso e bucket público</>}
          >
            O S3 bloqueará novas políticas de bucket e ponto de acesso que concedem acesso público a buckets e objetos. Essa configuração não altera nenhuma política existente que
            <br />
            permita o acesso público aos recursos do S3.
          </Setting>
          <Setting
            className="mt-[10px]"
            tick="top-[22px]"
            label={<>Bloquear acesso público e entre contas a buckets e objetos por meio de <i>qualquer</i> política de bucket ou ponto de acesso público</>}
          >
            O S3 ignorará o acesso público e entre contas para buckets ou pontos de acesso com políticas que concedem acesso público a buckets e objetos.
          </Setting>
        </div>
      </section>
      <div className="mt-[27px] flex w-[1406px] items-center justify-end">
        <button className="-mt-[2px] text-[17.750px] font-bold leading-[27px] text-[#1a66d6]">Cancelar</button>
        <button className="ml-[40px] flex h-[41px] w-[209px] items-center justify-center rounded-full bg-[#fd9926] pb-[2px] text-[17.700px] font-bold leading-[27px] text-[#0f141a]">
          Salvar alterações
        </button>
      </div>
    </main>
  );
}

/* ---------- footer ---------- */

function Footer() {
  return (
    <footer className="flex h-[40px] items-center whitespace-nowrap border-t border-[#3b424d] bg-[#161d26] pb-px text-[15.100px] font-medium leading-[22px] text-white">
      <Terminal className="ml-[21px] size-[22px]" />
      <span className="ml-[7px] w-[78px] text-[15.400px]">CloudShell</span>
      <span className="ml-[34px] w-[93px]">Comentários</span>
      <span className="ml-[772px] w-[384px] text-[15.500px] font-normal text-[#d5d5da]">© 2024, Amazon Web Services, Inc. ou suas afiliadas.</span>
      <span className="ml-[40px] w-[84px]">Privacidade</span>
      <span className="ml-[33px] w-[54px]">Termos</span>
      <span className="ml-[33px] w-[170px]">Preferências de cookies</span>
    </footer>
  );
}

function PageScrollbar() {
  return (
    <div className="flex w-[19px] shrink-0 flex-col items-center bg-[#252735]">
      <Ico className="mt-[5px] size-[8px] text-[#b5b5c0]" box={8} sw={1.500}>
        <path d="m1 6 3-4 3 4" />
      </Ico>
      <span className="mt-[7px] h-[844px] w-[8px] rounded-full bg-[#4a4b63]" />
      <Ico className="mt-[34px] size-[8px] text-[#6a6b80]" box={8} sw={1.500}>
        <path d="m1 2 3 4 3-4" />
      </Ico>
    </div>
  );
}

export default function App() {
  return (
    <div className="flex h-[1050px] w-[1920px] overflow-hidden bg-[#07060b] font-['Noto_Sans',sans-serif]">
      <Rail />
      <div className="flex w-[1866px] flex-col">
        <TabStrip />
        <div className="flex h-[1008px] flex-col border-l border-[#6c46c4]">
          <AddressBar />
          <Bookmarks />
          <div className="flex h-[911px]">
            <div className="flex w-[1846px] flex-col">
              <AwsNav />
              <Breadcrumb />
              <div className="flex h-[760px]">
                <SideNav />
                <Main />
              </div>
              <Footer />
            </div>
            <PageScrollbar />
          </div>
        </div>
      </div>
    </div>
  );
}
